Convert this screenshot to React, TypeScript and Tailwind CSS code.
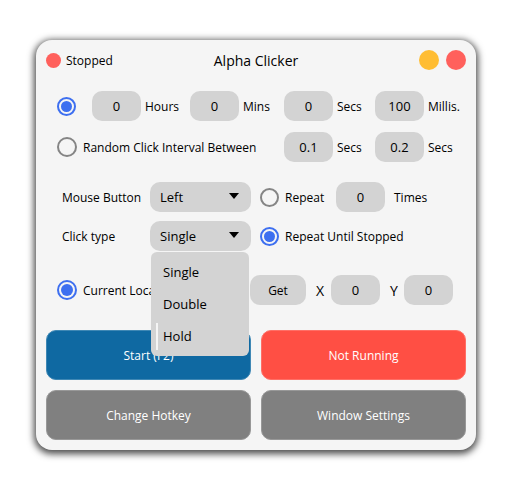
import { useState, type ReactNode } from "react";
import clsx from "clsx";

const radioBase =
  "shrink-0 appearance-none rounded-full border-2 border-[#858585] bg-clip-content p-[2px] checked:border-[#3d6ff0] checked:bg-[#3d6ff0]";

function Radio({ name, id, checked = false, label, large = false }: {
  name: string;
  id: string;
  checked?: boolean;
  label?: string;
  large?: boolean;
}) {
  return (
    <input
      type="radio"
      id={id}
      name={name}
      defaultChecked={checked}
      aria-label={label}
      className={clsx(radioBase, large ? "size-5" : "size-[19px]")}
    />
  );
}

function Field({ id, value, label }: { id: string; value: string; label?: string }) {
  return (
    <input
      id={id}
      type="text"
      defaultValue={value}
      aria-label={label}
      className="h-[30px] w-[49px] shrink-0 rounded-[10px] bg-[#d3d3d3] text-center text-[13px] outline-none"
    />
  );
}

function Unit({ id, value, children }: { id: string; value: string; children: ReactNode }) {
  return (
    <div className="flex items-center gap-1">
      <Field id={id} value={value} />
      <label htmlFor={id}>{children}</label>
    </div>
  );
}

function Picker({ id, options, value, onChange }: {
  id: string;
  options: string[];
  value: string;
  onChange: (value: string) => void;
}) {
  return (
    <div className="relative w-[101px]">
      <select
        id={id}
        value={value}
        onChange={(e) => onChange(e.target.value)}
        className="h-[30px] w-full appearance-none rounded-[10px] bg-[#d3d3d3] pt-0.5 pl-[10px] text-[13px] outline-none"
      >
        {options.map((o) => (
          <option key={o}>{o}</option>
        ))}
      </select>
      <svg viewBox="0 0 10 6" className="pointer-events-none absolute top-[11px] right-3 h-[6px] w-[10px]">
        <path d="M0 0h10L5 6z" fill="black" />
      </svg>
    </div>
  );
}

const clickTypes = ["Single", "Double", "Hold"];

function ActionButton({ className, children }: { className: string; children: ReactNode }) {
  return (
    <button type="button" className={clsx("h-[50px] rounded-[10px] border pt-0.5 text-xs text-white", className)}>
      {children}
    </button>
  );
}

export default function App() {
  const [button, setButton] = useState("Left");
  const [clickType, setClickType] = useState("Single");

  return (
    <div className="min-h-screen bg-white pt-10 pr-[43px] pl-9 font-['Open_Sans',sans-serif] text-xs text-black">
      <main className="rounded-2xl bg-[#f5f5f5] p-[10px] shadow-[0_2px_7px_2px_rgba(0,0,0,0.7)] [&_label]:pt-0.5">
        <header className="grid h-5 grid-cols-[1fr_auto_1fr] items-center">
          <div className="flex items-center gap-[5px]">
            <span className="size-[15px] rounded-full bg-[#ff605c]" />
            <span className="pt-0.5">Stopped</span>
          </div>
          <h1 className="pt-0.5 text-sm leading-[18px]">Alpha Clicker</h1>
          <div className="flex justify-end gap-[7px]">
            <button type="button" aria-label="Minimize" className="size-5 rounded-full bg-[#ffbd33]" />
            <button type="button" aria-label="Close" className="size-5 rounded-full bg-[#ff605c]" />
          </div>
        </header>

        <div className="mt-[21px] pl-[11px]">
          <div className="grid grid-cols-[35px_98px_94px_91px_1fr] items-center gap-y-[11px]">
            <Radio name="interval" id="fixed" label="Fixed interval" checked />
            <Unit id="hours" value="0">Hours</Unit>
            <Unit id="mins" value="0">Mins</Unit>
            <Unit id="secs" value="0">Secs</Unit>
            <Unit id="millis" value="100">Millis.</Unit>
            <div className="col-span-3 flex items-center gap-[6px]">
              <Radio name="interval" id="random" large />
              <label htmlFor="random">Random Click Interval Between</label>
            </div>
            <Unit id="from" value="0.1">Secs</Unit>
            <Unit id="to" value="0.2">Secs</Unit>
          </div>

          <div className="mt-5 grid grid-cols-[88px_110px_1fr] items-center gap-y-[9px] pl-[5px]">
            <label htmlFor="mouse-button">Mouse Button</label>
            <Picker id="mouse-button" options={["Left", "Middle", "Right"]} value={button} onChange={setButton} />
            <div className="flex items-center">
              <Radio name="repeat" id="repeat" />
              <label htmlFor="repeat" className="w-[57px] pl-[6px]">Repeat</label>
              <Field id="times" value="0" />
              <label htmlFor="times" className="pl-[9px]">Times</label>
            </div>
            <label htmlFor="click-type">Click type</label>
            <div className="relative">
              <Picker id="click-type" options={clickTypes} value={clickType} onChange={setClickType} />
              <ul
                role="listbox"
                aria-label="Click type options"
                className="absolute top-[31px] left-px z-10 w-[98px] rounded-md bg-[#d3d3d3] py-1 text-[13px]"
              >
                {clickTypes.map((type) => (
                  <li
                    key={type}
                    role="option"
                    aria-selected={type === clickType}
                    onClick={() => setClickType(type)}
                    className="flex h-8 items-center gap-[5px] pl-[5px]"
                  >
                    <span className={clsx("h-[27px] w-[2px]", type === "Hold" && "bg-[#f5f5f5]")} />
                    <span className="pt-0.5">{type}</span>
                  </li>
                ))}
              </ul>
            </div>
            <div className="flex items-center gap-[6px]">
              <Radio name="repeat" id="forever" checked />
              <label htmlFor="forever">Repeat Until Stopped</label>
            </div>
          </div>

          <div className="mt-6 flex items-center">
            <div className="flex w-[193px] items-center gap-[6px]">
              <Radio name="location" id="current" large checked />
              <label htmlFor="current">Current Location</label>
            </div>
            <button type="button" className="h-[30px] w-14 rounded-[10px] bg-[#d3d3d3] pt-0.5">Get</button>
            <label htmlFor="x" className="w-[25px] pl-[10px] text-sm">X</label>
            <Field id="x" value="0" />
            <label htmlFor="y" className="w-6 pl-[10px] text-sm">Y</label>
            <Field id="y" value="0" />
          </div>
        </div>

        <div className="mt-[25px] grid grid-cols-2 gap-[10px]">
          <ActionButton className="border-[#3f88b5] bg-[#0f69a2]">Start (F2)</ActionButton>
          <ActionButton className="border-[#ff6f66] bg-[#ff4f44]">Not Running</ActionButton>
          <ActionButton className="border-[#989898] bg-[#808080]">Change Hotkey</ActionButton>
          <ActionButton className="border-[#989898] bg-[#808080]">Window Settings</ActionButton>
        </div>
      </main>
    </div>
  );
}
